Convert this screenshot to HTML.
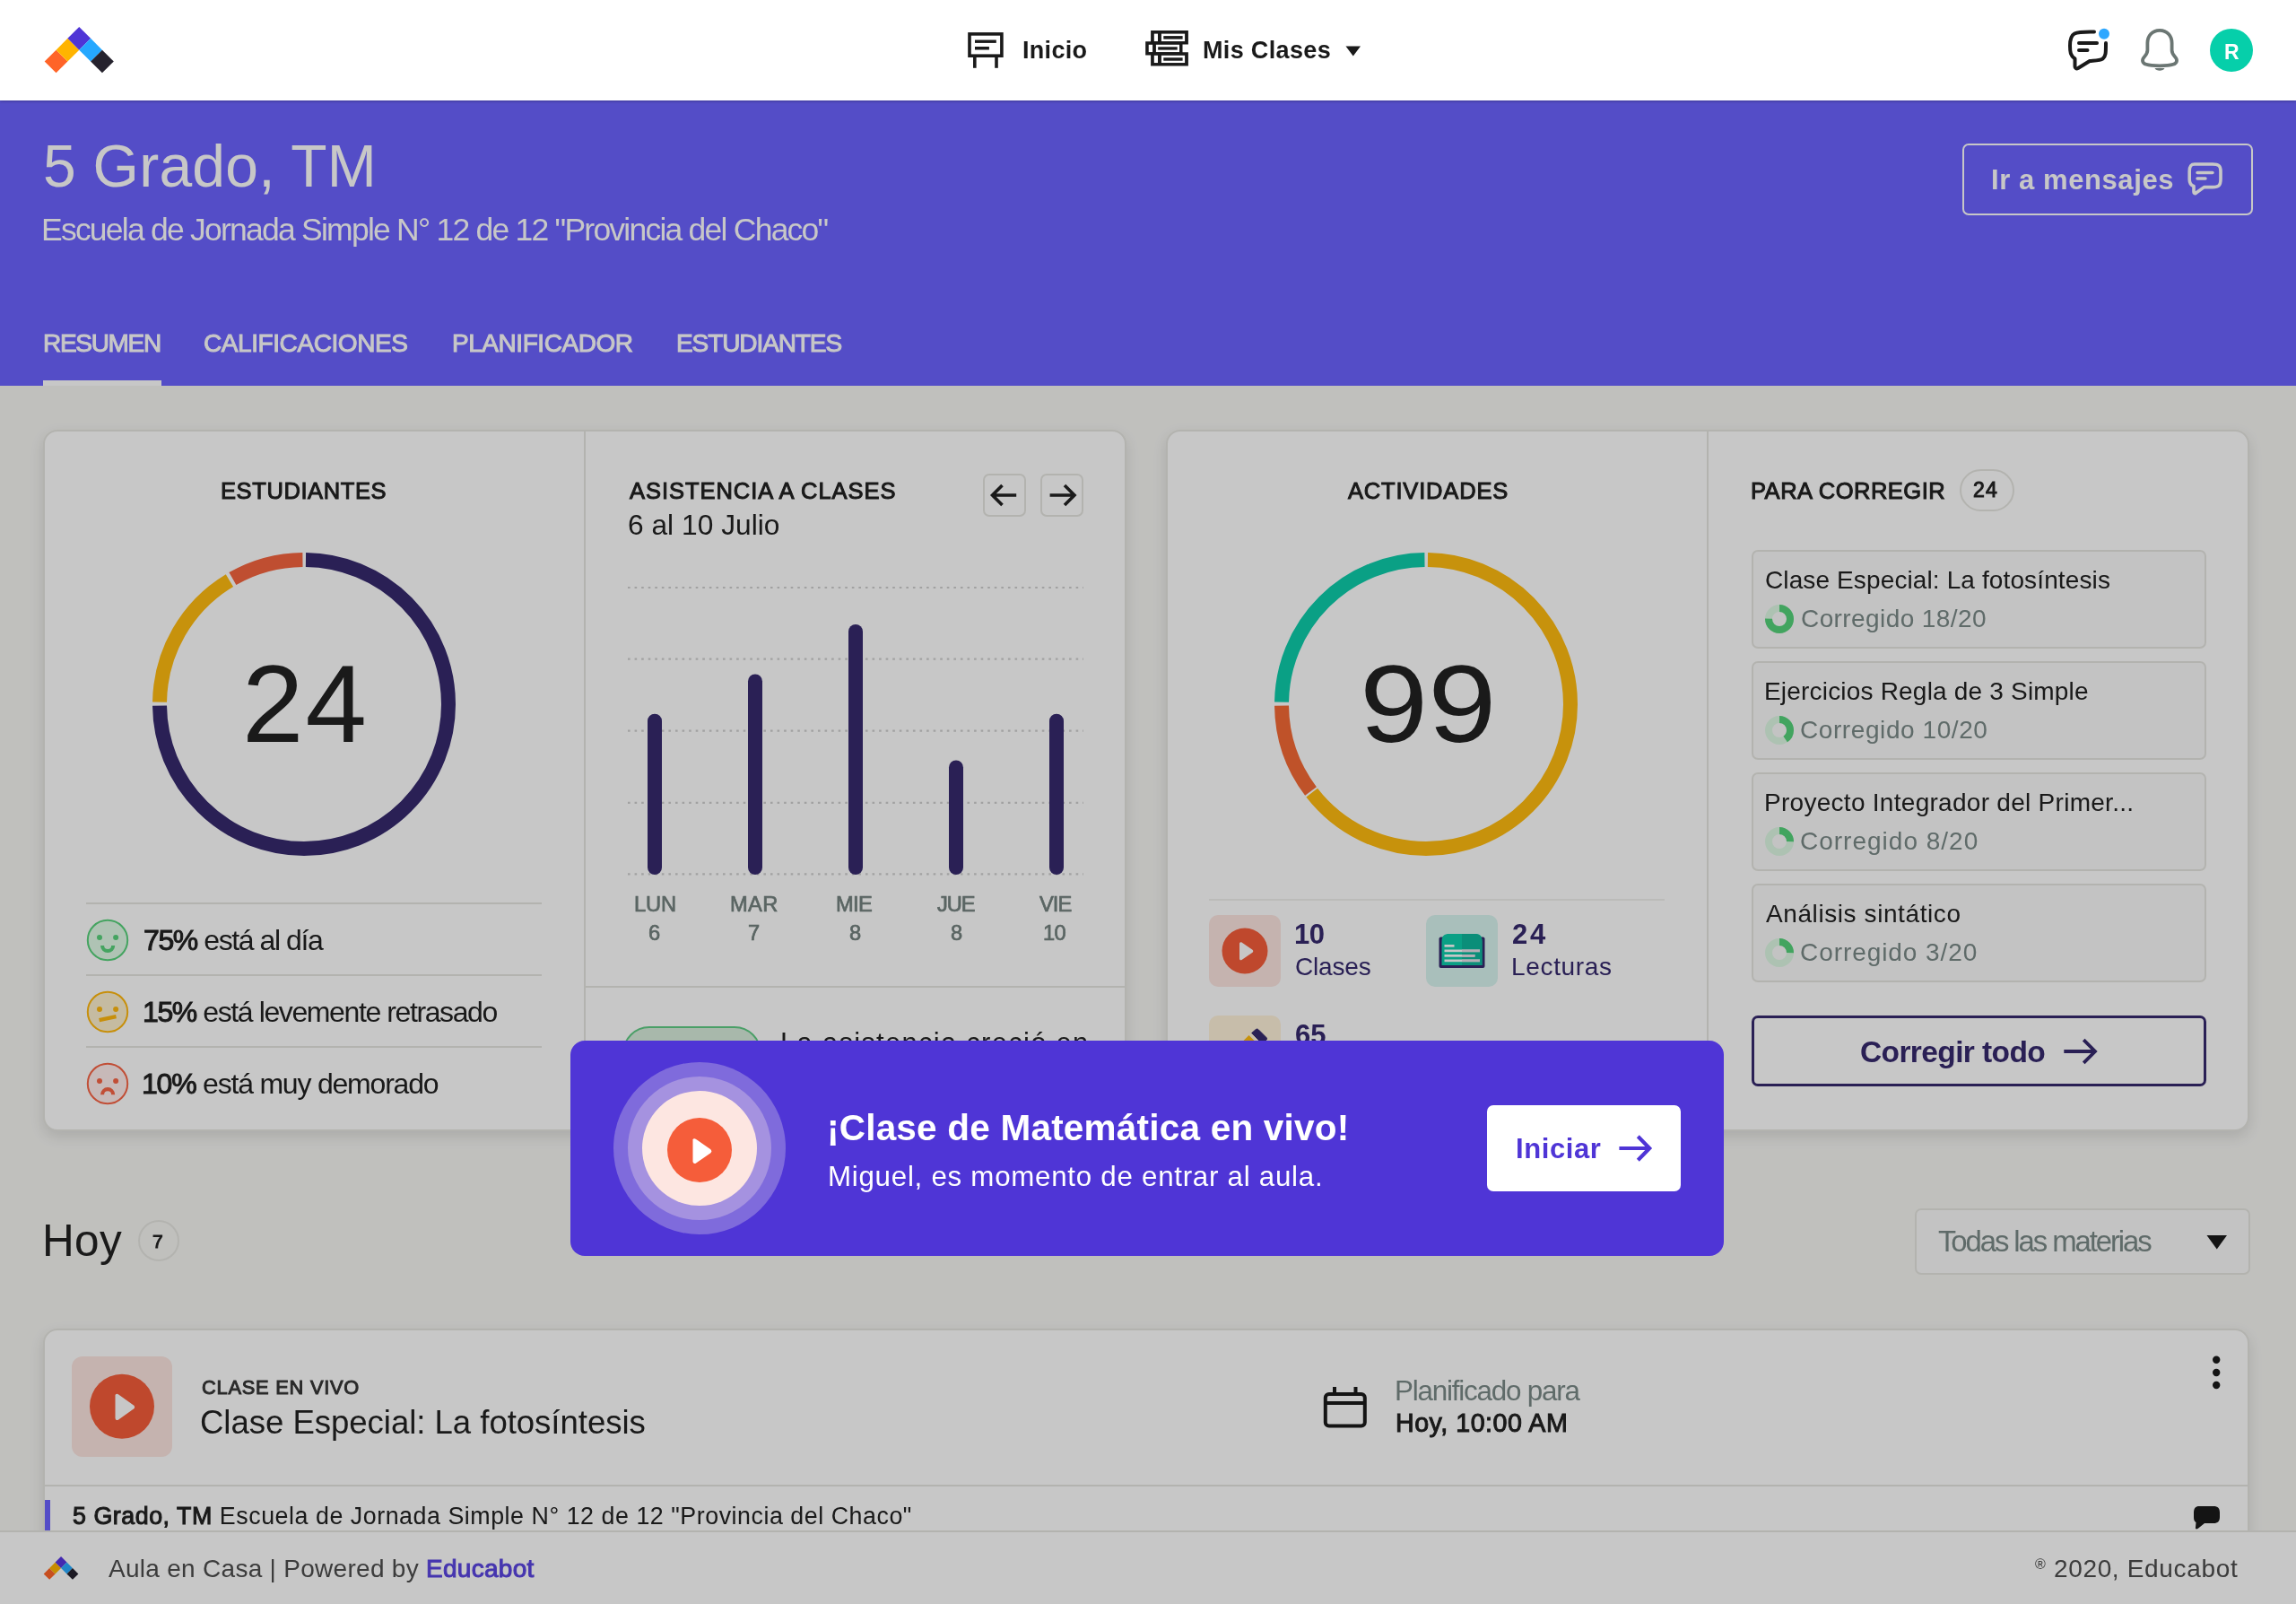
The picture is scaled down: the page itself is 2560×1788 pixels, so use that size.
<!DOCTYPE html>
<html><head><meta charset="utf-8">
<style>
*{box-sizing:border-box;margin:0;padding:0}
html,body{width:2560px;height:1788px;overflow:hidden}
body{position:relative;background:#f6f6f3;font-family:"Liberation Sans",sans-serif;color:#222}
.a{position:absolute}
.t{position:absolute;line-height:1;white-space:nowrap;will-change:transform}
.b{font-weight:normal;-webkit-text-stroke:1px currentColor}
b{font-weight:normal;-webkit-text-stroke:1px currentColor}
#header{position:absolute;left:0;top:0;width:2560px;height:112px;background:#fff;z-index:5;box-shadow:0 1px 3px rgba(0,0,0,0.25)}
#hero{position:absolute;left:0;top:112px;width:2560px;height:318px;background:#6c63ff;color:#fff}
.card{position:absolute;background:#fff;border:2px solid #e6e6e1;border-radius:16px;box-shadow:0 6px 16px rgba(0,0,0,0.11)}
#overlay{position:absolute;left:0;top:112px;width:2560px;height:1676px;background:rgba(0,0,0,0.22);z-index:4}
#banner{position:absolute;left:636px;top:1160px;width:1286px;height:240px;background:#4f35d6;border-radius:16px;z-index:10;color:#fff}
.it{border:2px solid #e6e6e1;border-radius:7px;background:#fafafa}
</style></head>
<body>
<div id="header">
<svg class="a" style="left:0;top:0" width="140" height="112" viewBox="0 0 140 112">
<polygon points="49.7,68.5 62.55,55.65 75.4,68.5 62.55,81.35" fill="#ff6428"/>
<polygon points="62.55,55.65 75.4,42.8 88.25,55.65 75.4,68.5" fill="#ffb400"/>
<polygon points="75.4,42.8 88.25,29.95 101.1,42.8 88.25,55.65" fill="#4f35d6"/>
<polygon points="88.25,55.65 101.1,42.8 113.95,55.65 101.1,68.5" fill="#25a8ff"/>
<polygon points="101.1,68.5 113.95,55.65 126.8,68.5 113.95,81.35" fill="#25222d"/>
</svg>
<!-- Inicio icon -->
<svg class="a" style="left:1075px;top:30px" width="50" height="50" viewBox="1075 30 50 50">
<rect x="1081" y="37.9" width="35.9" height="24.3" fill="none" stroke="#1a1a1a" stroke-width="3.6"/>
<rect x="1087" y="44.5" width="23.8" height="3.4" fill="#1a1a1a"/>
<rect x="1087" y="52" width="15.9" height="3.5" fill="#1a1a1a"/>
<rect x="1085" y="63" width="3.6" height="12.8" fill="#1a1a1a"/>
<rect x="1109.2" y="63" width="3.6" height="12.8" fill="#1a1a1a"/>
</svg>
<div class="t b" id="inicio" style="left:1139.50px;top:42.74px;font-size:27.00px;color:#1a1a1a;letter-spacing:0.300px;font-weight:bold;-webkit-text-stroke:0">Inicio</div>
<!-- Mis clases icon -->
<svg class="a" style="left:1270px;top:30px" width="60" height="50" viewBox="1270 30 60 50">
<polygon points="1283.1,34.05 1324.9,34.05 1324.9,49.5 1318.5,49.5 1318.5,58.2 1324.9,58.2 1324.9,73.6 1283.1,73.6 1283.1,61.5 1277.2,61.5 1277.2,46.2 1283.1,46.2" fill="#1a1a1a"/>
<g fill="#fff">
<rect x="1286.8" y="37.6" width="4.2" height="8.45"/><rect x="1294.9" y="37.6" width="26.2" height="8.45"/>
<rect x="1280.75" y="49.8" width="4.35" height="8.25"/><rect x="1288.9" y="49.8" width="26.1" height="8.25"/>
<rect x="1286.8" y="61.8" width="4.2" height="8.25"/><rect x="1294.9" y="61.8" width="26.2" height="8.25"/>
</g>
<g fill="#1a1a1a">
<rect x="1297.3" y="40.1" width="21.3" height="3.5"/>
<rect x="1291.2" y="52.3" width="21.5" height="3.3"/>
<rect x="1297.3" y="64.3" width="21.3" height="3.4"/>
</g>
</svg>
<div class="t b" id="misclases" style="left:1341.30px;top:42.74px;font-size:27.00px;color:#1a1a1a;letter-spacing:0.341px;font-weight:bold;-webkit-text-stroke:0">Mis Clases</div>
<svg class="a" style="left:1500px;top:51px" width="18" height="12" viewBox="0 0 18 12"><polygon points="0.5,0.5 17,0.5 8.75,11.5" fill="#1a1a1a"/></svg>
<!-- chat icon -->
<svg class="a" style="left:2300px;top:28px" width="56" height="56" viewBox="2300 28 56 56">
<path d="M2335,35.5 C2325,35.3 2317,35.5 2313,37.5 C2308.5,40 2308,45 2308,51 C2308,58 2308.5,62 2313.5,65.5 L2313.5,74 C2313.5,76 2315,77 2317,76 L2330,68 C2336,67.5 2342,67.5 2344.5,65.5 C2348,63 2348,59 2348,48" fill="none" stroke="#1a1a1a" stroke-width="4" stroke-linecap="round" stroke-linejoin="round"/>
<line x1="2318" y1="48" x2="2338" y2="48" stroke="#1a1a1a" stroke-width="4" stroke-linecap="round"/>
<line x1="2318" y1="56" x2="2327.5" y2="56" stroke="#1a1a1a" stroke-width="4" stroke-linecap="round"/>
<circle cx="2346" cy="37.8" r="6" fill="#2ea7ff"/>
</svg>
<!-- bell -->
<svg class="a" style="left:2380px;top:28px" width="56" height="56" viewBox="2380 28 56 56">
<path d="M2408,33.8 C2399.5,33.8 2394.4,40.5 2394.4,48 L2394.4,56 C2394.4,59 2393.5,60.5 2391,63.2 C2387.5,67 2388.8,70.5 2393,71.8 C2399,73.8 2417,73.8 2423,71.8 C2427.2,70.5 2428.5,67 2425,63.2 C2422.5,60.5 2421.6,59 2421.6,56 L2421.6,48 C2421.6,40.5 2416.5,33.8 2408,33.8 Z" fill="none" stroke="#6b7673" stroke-width="3.8" stroke-linejoin="round"/>
<path d="M2402.5,76 L2413.5,76 C2412,79.5 2404,79.5 2402.5,76 Z" fill="#6b7673"/>
</svg>
<div class="a" style="left:2464px;top:32px;width:48px;height:48px;border-radius:50%;background:#06cfaa"></div>
<div class="t b" id="avR" style="left:2480.00px;top:47.4px;font-size:23px;color:#fff;font-weight:bold;-webkit-text-stroke:0">R</div>
</div>
<div id="hero">
<div class="t" id="title" style="left:48.40px;top:40.1px;font-size:66px;letter-spacing:0.260px">5 Grado, TM</div>
<div class="t" id="subt" style="left:45.50px;top:127.25px;font-size:35.5px;letter-spacing:-1.768px">Escuela de Jornada Simple N° 12 de 12 "Provincia del Chaco"</div>
<div class="t b" id="tab1" style="left:47.50px;top:256.50px;font-size:28.00px;letter-spacing:-1.303px">RESUMEN</div>
<div class="t b" id="tab2" style="left:227.00px;top:256.50px;font-size:28.00px;letter-spacing:-0.424px">CALIFICACIONES</div>
<div class="t b" id="tab3" style="left:503.60px;top:256.50px;font-size:28.00px;letter-spacing:-0.444px">PLANIFICADOR</div>
<div class="t b" id="tab4" style="left:753.60px;top:256.50px;font-size:28.00px;letter-spacing:-1.090px">ESTUDIANTES</div>
<div class="a" style="left:48px;top:312px;width:132px;height:6px;background:#fff"></div>
<div class="a" style="left:2188px;top:48px;width:324px;height:80px;border:2px solid #fff;border-radius:7px"></div>
<div class="t b" id="irmsg" style="left:2219.70px;top:72.56px;font-size:31.00px;letter-spacing:0.582px;font-weight:bold;-webkit-text-stroke:0">Ir a mensajes</div>
<svg class="a" style="left:2436px;top:64px" width="48" height="60" viewBox="2436 64 48 60">
<path d="M2447,71 C2442.5,71 2441.2,73.5 2441.2,79 L2441.2,88 C2441.2,92 2442.5,94.5 2446,95.5 L2446,102 C2446,103.5 2447,104 2448.3,103.3 L2457.5,96.6 L2467,96.6 C2474,96.6 2476,94.6 2476,87.6 L2476,79 C2476,73 2474,71 2467,71 Z" fill="none" stroke="#fff" stroke-width="3.6" stroke-linejoin="round"/>
<line x1="2450" y1="80.5" x2="2467" y2="80.5" stroke="#fff" stroke-width="3.4" stroke-linecap="round"/>
<line x1="2450" y1="87" x2="2459" y2="87" stroke="#fff" stroke-width="3.4" stroke-linecap="round"/>
</svg>
</div>
<div class="card" id="c1" style="left:48px;top:479px;width:1208px;height:782px"></div>
<div class="a" style="left:651px;top:481px;width:2px;height:777px;background:#e6e6e1"></div>
<div class="a" style="left:653px;top:1099px;width:601px;height:2px;background:#e6e6e1"></div>
<div class="t b" id="h_est" style="left:246.20px;top:534.71px;font-size:25.50px;letter-spacing:0.600px">ESTUDIANTES</div>
<svg class="a" style="left:160px;top:606px" width="358" height="358" viewBox="0 0 358 358">
<g transform="rotate(-90 179 179)" fill="none" stroke-width="16">
<circle cx="179" cy="179" r="161" stroke="#362a6e" stroke-dasharray="754.7 1100" stroke-dashoffset="-2"/>
<circle cx="179" cy="179" r="161" stroke="#ffbb10" stroke-dasharray="163.2 1100" stroke-dashoffset="-760.7"/>
<circle cx="179" cy="179" r="161" stroke="#f5653f" stroke-dasharray="81.7 1100" stroke-dashoffset="-927.9"/>
</g>
</svg>
<div class="t" id="n24" style="left:269.90px;top:723px;font-size:123px;letter-spacing:2.100px">24</div>
<div class="a" style="left:96px;top:1005.5px;width:508px;height:2px;background:#e6e6e1"></div>
<div class="a" style="left:96px;top:1085.5px;width:508px;height:2px;background:#e6e6e1"></div>
<div class="a" style="left:96px;top:1165.5px;width:508px;height:2px;background:#e6e6e1"></div>
<svg class="a" style="left:96px;top:1024px" width="48" height="48" viewBox="0 0 48 48">
<circle cx="24" cy="24" r="22.2" fill="#e0fae7" stroke="#58d27c" stroke-width="2"/>
<circle cx="15" cy="21" r="3" fill="#58d27c"/><circle cx="33.1" cy="21" r="3" fill="#58d27c"/>
<path d="M16,30 A8.1,8.1 0 0 0 32.2,30 L28.1,30 A4,4 0 0 1 20.1,30 Z" fill="#58d27c"/>
</svg>
<svg class="a" style="left:96px;top:1104px" width="48" height="48" viewBox="0 0 48 48">
<circle cx="24" cy="24" r="22.2" fill="#fdf0cf" stroke="#ffb80f" stroke-width="2"/>
<circle cx="15" cy="21" r="3" fill="#ffb80f"/><circle cx="33.1" cy="21" r="3" fill="#ffb80f"/>
<line x1="14.6" y1="33.1" x2="33.5" y2="29.1" stroke="#ffb80f" stroke-width="4.4"/>
</svg>
<svg class="a" style="left:96px;top:1184px" width="48" height="48" viewBox="0 0 48 48">
<circle cx="24" cy="24" r="22.2" fill="#ffeeec" stroke="#f86546" stroke-width="2"/>
<circle cx="15" cy="21" r="3" fill="#f86546"/><circle cx="33.1" cy="21" r="3" fill="#f86546"/>
<path d="M16,36.2 A8.1,8.1 0 0 1 32.2,36.2 L28.1,36.2 A4,4 0 0 0 20.1,36.2 Z" fill="#f86546"/>
</svg>
<div class="t" id="st1" style="left:159.70px;top:1031.9px;font-size:32px;letter-spacing:-1.418px"><b>75%</b> está al día</div>
<div class="t" id="st2" style="left:158.70px;top:1111.9px;font-size:32px;letter-spacing:-1.399px"><b>15%</b> está levemente retrasado</div>
<div class="t" id="st3" style="left:158.20px;top:1191.9px;font-size:32px;letter-spacing:-1.210px"><b>10%</b> está muy demorado</div>
<div class="t b" id="h_asi" style="left:702.30px;top:534.81px;font-size:25.50px;letter-spacing:0.960px">ASISTENCIA A CLASES</div>
<div class="t" id="julio" style="left:700.00px;top:569.8px;font-size:31.7px;letter-spacing:0.025px">6 al 10 Julio</div>
<div class="a" style="left:1096px;top:528px;width:48px;height:47.5px;border:2px solid #e6e6e1;border-radius:7px"></div>
<div class="a" style="left:1160px;top:528px;width:48px;height:47.5px;border:2px solid #e6e6e1;border-radius:7px"></div>
<svg class="a" style="left:1096px;top:528px" width="112" height="48" viewBox="1096 528 112 48">
<g fill="none" stroke="#222" stroke-width="3.6" stroke-linecap="butt" stroke-linejoin="miter">
<path d="M1133.2,552 L1106.5,552 M1117.5,541 L1106.5,552 L1117.5,563"/>
<path d="M1170.6,552 L1198,552 M1187,541 L1198,552 L1187,563"/>
</g>
</svg>
<svg class="a" style="left:700px;top:650px" width="510" height="330" viewBox="700 650 510 330">
<g stroke="#cfcfcf" stroke-width="2.2" stroke-dasharray="2.6 4.97">
<line x1="700" y1="655" x2="1208" y2="655"/>
<line x1="700" y1="734.7" x2="1208" y2="734.7"/>
<line x1="700" y1="814.6" x2="1208" y2="814.6"/>
<line x1="700" y1="894.8" x2="1208" y2="894.8"/>
<line x1="700" y1="974.4" x2="1208" y2="974.4"/>
</g>
<g stroke="#362a6e" stroke-width="16" stroke-linecap="round">
<line x1="730" y1="803.7" x2="730" y2="967"/>
<line x1="842" y1="759.4" x2="842" y2="967"/>
<line x1="954" y1="704" x2="954" y2="967"/>
<line x1="1066" y1="855.5" x2="1066" y2="967"/>
<line x1="1178" y1="803.7" x2="1178" y2="967"/>
</g>
</svg>
<div class="t" id="d1" style="left:706.50px;top:997.00px;font-size:23.7px;color:#74827f;-webkit-text-stroke:0.7px #74827f;letter-spacing:-0.200px">LUN</div>
<div class="t" id="d2" style="left:814.00px;top:997.00px;font-size:23.7px;color:#74827f;-webkit-text-stroke:0.7px #74827f;letter-spacing:0.300px">MAR</div>
<div class="t" id="d3" style="left:932.00px;top:997.00px;font-size:23.7px;color:#74827f;-webkit-text-stroke:0.7px #74827f;letter-spacing:-0.650px">MIE</div>
<div class="t" id="d4" style="left:1045.00px;top:997.00px;font-size:23.7px;color:#74827f;-webkit-text-stroke:0.7px #74827f;letter-spacing:-1.150px">JUE</div>
<div class="t" id="d5" style="left:1159.00px;top:997.00px;font-size:23.7px;color:#74827f;-webkit-text-stroke:0.7px #74827f;letter-spacing:-1.000px">VIE</div>
<div class="t" id="n1" style="left:722.50px;top:1029.00px;font-size:23.7px;color:#74827f;-webkit-text-stroke:0.7px #74827f">6</div>
<div class="t" id="n2" style="left:834.00px;top:1029.00px;font-size:23.7px;color:#74827f;-webkit-text-stroke:0.7px #74827f">7</div>
<div class="t" id="n3" style="left:946.50px;top:1029.00px;font-size:23.7px;color:#74827f;-webkit-text-stroke:0.7px #74827f">8</div>
<div class="t" id="n4" style="left:1059.70px;top:1029.00px;font-size:23.7px;color:#74827f;-webkit-text-stroke:0.7px #74827f">8</div>
<div class="t" id="n5" style="left:1163.40px;top:1029.00px;font-size:23.7px;color:#74827f;-webkit-text-stroke:0.7px #74827f;letter-spacing:-0.700px">10</div>
<div class="a" style="left:694px;top:1144px;width:155px;height:60px;border:2px solid #5fcc85;background:#d8ecdc;border-radius:30px"></div>
<div class="t" id="crecio" style="left:870px;top:1147px;font-size:31px;letter-spacing:1.27px">La asistencia creció en</div>
<div class="card" id="c2" style="left:1300px;top:479px;width:1208px;height:782px"></div>
<div class="a" style="left:1903px;top:481px;width:2px;height:777px;background:#e6e6e1"></div>
<div class="t b" id="h_act" style="left:1502.50px;top:535.01px;font-size:25.50px;letter-spacing:0.820px">ACTIVIDADES</div>
<svg class="a" style="left:1411px;top:606px" width="358" height="358" viewBox="0 0 358 358">
<g transform="rotate(-90 179 179)" fill="none" stroke-width="16">
<circle cx="179" cy="179" r="161" stroke="#ffbb10" stroke-dasharray="650.3 1100" stroke-dashoffset="-2"/>
<circle cx="179" cy="179" r="161" stroke="#f56a35" stroke-dasharray="102.4 1100" stroke-dashoffset="-654.3"/>
<circle cx="179" cy="179" r="161" stroke="#0dcdab" stroke-dasharray="248.9 1100" stroke-dashoffset="-760.7"/>
</g>
</svg>
<div class="t" id="n99" style="left:1516.1px;top:723px;font-size:123px;transform:scaleX(1.113);transform-origin:0 0">99</div>
<div class="a" style="left:1348px;top:1002px;width:508px;height:2px;background:#f0f0ee"></div>
<div class="a" style="left:1348px;top:1020px;width:80px;height:80px;border-radius:10px;background:#fde6e1"></div>
<svg class="a" style="left:1348px;top:1020px" width="80" height="80" viewBox="0 0 80 80">
<circle cx="40" cy="40" r="25.5" fill="#f55d3a"/>
<path d="M34,32 L34,48.5 C34,50 35.2,50.8 36.5,50 L48.5,41.8 C49.5,41 49.5,39.5 48.5,38.8 L36.5,30.5 C35.2,29.7 34,30.5 34,32 Z" fill="#fff"/>
</svg>
<div class="t b" id="a10" style="left:1442.50px;top:1026.16px;font-size:31px;color:#362a6e;font-weight:bold;-webkit-text-stroke:0;letter-spacing:-0.500px">10</div>
<div class="t" id="aclases" style="left:1443.50px;top:1064px;font-size:28px;color:#362a6e;letter-spacing:-0.180px">Clases</div>
<div class="a" style="left:1590px;top:1020px;width:80px;height:80px;border-radius:10px;background:#d9f5f0"></div>
<svg class="a" style="left:1590px;top:1020px" width="80" height="80" viewBox="0 0 80 80">
<rect x="14.5" y="24.5" width="51" height="34.5" rx="2" fill="#362a6e"/>
<path d="M17.5,30 C17.5,23 20,21 26,21 L54,21 C60,21 62.5,23 62.5,30 L62.5,56 L17.5,56 Z" fill="#0dcdab"/>
<path d="M40,21 L54,21 C60,21 62.5,23 62.5,30 L62.5,56 L40,56 Z" fill="#0fb69c"/>
<g fill="#fff">
<rect x="20.5" y="33" width="11" height="2.7"/>
<rect x="20.5" y="38.5" width="39.5" height="2.7"/>
<rect x="20.5" y="44" width="34" height="2.7"/>
<rect x="20.5" y="49.5" width="39.5" height="2.7"/>
</g>
<g fill="#e8dce8" opacity="0.9">
<rect x="40" y="38.5" width="20" height="2.7"/>
<rect x="40" y="44" width="14.5" height="2.7"/>
<rect x="40" y="49.5" width="20" height="2.7"/>
</g>
</svg>
<div class="t b" id="a24" style="left:1685.70px;top:1026.16px;font-size:31px;color:#362a6e;font-weight:bold;-webkit-text-stroke:0;letter-spacing:2.700px">24</div>
<div class="t" id="alect" style="left:1684.70px;top:1064px;font-size:28px;color:#362a6e;letter-spacing:0.667px">Lecturas</div>
<div class="a" style="left:1348px;top:1132px;width:80px;height:80px;border-radius:10px;background:#fff3da"></div>
<svg class="a" style="left:1348px;top:1132px" width="80" height="80" viewBox="0 0 80 80">
<polygon points="44.5,22.1 52,29.6 44.5,37 37,29.6" fill="#ffbb10"/>
<path d="M47.7,19.5 L52.2,15.6 C53,14.9 54.3,14.9 55.1,15.7 L64,24.6 C64.8,25.4 64.8,26.6 64,27.3 L58.5,30.7 Z" fill="#362a6e" stroke="#362a6e" stroke-width="1" stroke-linejoin="round"/>
</svg>
<div class="t b" id="a65" style="left:1444px;top:1138.16px;font-size:31px;color:#362a6e;font-weight:bold;-webkit-text-stroke:0">65</div>
<div class="t b" id="h_par" style="left:1952.20px;top:534.71px;font-size:25.50px;letter-spacing:0.502px">PARA CORREGIR</div>
<div class="a" style="left:2184.5px;top:522.5px;width:61px;height:47px;border:2px solid #e6e6e1;border-radius:24px"></div>
<div class="t b" id="badge24" style="left:2200.40px;top:535.43px;font-size:23.00px;letter-spacing:1.300px">24</div>
<div class="a it" style="left:1952.5px;top:613px;width:507px;height:110px"></div>
<div class="a it" style="left:1952.5px;top:737px;width:507px;height:110px"></div>
<div class="a it" style="left:1952.5px;top:861px;width:507px;height:110px"></div>
<div class="a it" style="left:1952.5px;top:985px;width:507px;height:110px"></div>
<div class="t" id="it1" style="left:1968.00px;top:633.3px;font-size:28px;letter-spacing:0.119px">Clase Especial: La fotosíntesis</div>
<div class="t" id="it2" style="left:1966.60px;top:757.3px;font-size:28px;letter-spacing:0.192px">Ejercicios Regla de 3 Simple</div>
<div class="t" id="it3" style="left:1966.60px;top:881.3px;font-size:28px;letter-spacing:0.281px">Proyecto Integrador del Primer...</div>
<div class="t" id="it4" style="left:1968.60px;top:1005.3px;font-size:28px;letter-spacing:0.588px">Análisis sintático</div>
<svg class="a" style="left:1968px;top:674px" width="32" height="32" viewBox="0 0 32 32"><circle cx="16" cy="16" r="12" fill="none" stroke="#def9e5" stroke-width="8"/><circle cx="16" cy="16" r="12" fill="none" stroke="#55d27a" stroke-width="8" stroke-dasharray="56.55 100" transform="rotate(-90 16 16)"/></svg>
<svg class="a" style="left:1968px;top:798px" width="32" height="32" viewBox="0 0 32 32"><circle cx="16" cy="16" r="12" fill="none" stroke="#def9e5" stroke-width="8"/><circle cx="16" cy="16" r="12" fill="none" stroke="#55d27a" stroke-width="8" stroke-dasharray="30.4 100" transform="rotate(-90 16 16)"/></svg>
<svg class="a" style="left:1968px;top:922px" width="32" height="32" viewBox="0 0 32 32"><circle cx="16" cy="16" r="12" fill="none" stroke="#def9e5" stroke-width="8"/><circle cx="16" cy="16" r="12" fill="none" stroke="#55d27a" stroke-width="8" stroke-dasharray="18.85 100" transform="rotate(-90 16 16)"/></svg>
<svg class="a" style="left:1968px;top:1046px" width="32" height="32" viewBox="0 0 32 32"><circle cx="16" cy="16" r="12" fill="none" stroke="#def9e5" stroke-width="8"/><circle cx="16" cy="16" r="12" fill="none" stroke="#55d27a" stroke-width="8" stroke-dasharray="18.85 100" transform="rotate(-90 16 16)"/></svg>
<div class="t" id="co1" style="left:2007.60px;top:676.3px;font-size:28px;color:#7a8987;letter-spacing:0.414px">Corregido 18/20</div>
<div class="t" id="co2" style="left:2007.30px;top:800.3px;font-size:28px;color:#7a8987;letter-spacing:0.582px">Corregido 10/20</div>
<div class="t" id="co3" style="left:2007.30px;top:924.3px;font-size:28px;color:#7a8987;letter-spacing:1.001px">Corregido 8/20</div>
<div class="t" id="co4" style="left:2007.30px;top:1048.3px;font-size:28px;color:#7a8987;letter-spacing:0.924px">Corregido 3/20</div>
<div class="a" style="left:1952.5px;top:1132px;width:507px;height:79px;border:3px solid #362a6e;border-radius:7px"></div>
<div class="t b" id="corr" style="left:2073.90px;top:1156px;font-size:33.5px;color:#362a6e;letter-spacing:-0.610px;font-weight:bold;-webkit-text-stroke:0">Corregir todo</div>
<svg class="a" style="left:2296px;top:1148px" width="48" height="48" viewBox="2296 1148 48 48">
<path d="M2301.3,1172 L2335,1172 M2323.2,1159.2 L2336,1172 L2323.2,1184.8" fill="none" stroke="#362a6e" stroke-width="3.8" stroke-linecap="butt" stroke-linejoin="miter"/>
</svg>
<div class="t" id="hoy" style="left:47.20px;top:1358.2px;font-size:49.5px;letter-spacing:0.300px">Hoy</div>
<div class="a" style="left:154px;top:1359.5px;width:46px;height:46px;border:2px solid #e6e6e1;border-radius:50%"></div>
<div class="t b" id="badge7" style="left:169.70px;top:1372.72px;font-size:21.00px">7</div>
<div class="a" style="left:2135px;top:1347px;width:374px;height:74px;border:2px solid #e6e6e1;border-radius:7px;background:#fafafa"></div>
<div class="t" id="todas" style="left:2160.50px;top:1368.15px;font-size:32.9px;color:#7a8987;letter-spacing:-2.089px">Todas las materias</div>
<svg class="a" style="left:2460px;top:1376px" width="24" height="18" viewBox="0 0 24 18"><polygon points="0.5,1 23,1 11.75,16.5" fill="#1a1a1a"/></svg>
<div class="card" id="c3" style="left:48px;top:1481px;width:2460px;height:400px"></div>
<div class="a" style="left:80px;top:1512px;width:112px;height:112px;border-radius:12px;background:#fde6e1"></div>
<svg class="a" style="left:80px;top:1512px" width="112" height="111" viewBox="0 0 112 111">
<circle cx="56" cy="55.8" r="36" fill="#f55d3a"/>
<path d="M48.5,43.5 L48.5,68.5 C48.5,70.8 50.3,71.8 52.2,70.6 L69,58.6 C70.5,57.5 70.5,55.5 69,54.4 L52.2,42.4 C50.3,41.2 48.5,42.2 48.5,43.5 Z" fill="#fff"/>
</svg>
<div class="t b" id="cenvivo" style="left:224.70px;top:1535.75px;font-size:21.80px;color:#363636;letter-spacing:0.779px">CLASE EN VIVO</div>
<div class="t" id="cespecial" style="left:222.70px;top:1567.60px;font-size:36.6px;letter-spacing:-0.044px">Clase Especial: La fotosíntesis</div>
<svg class="a" style="left:1470px;top:1540px" width="60" height="56" viewBox="1470 1540 60 56">
<rect x="1477.8" y="1554" width="44" height="35.5" rx="4" fill="none" stroke="#1a1a1a" stroke-width="4"/>
<line x1="1477.8" y1="1564" x2="1521.8" y2="1564" stroke="#1a1a1a" stroke-width="3.8"/>
<line x1="1488" y1="1546" x2="1488" y2="1555" stroke="#1a1a1a" stroke-width="4"/>
<line x1="1511.5" y1="1546" x2="1511.5" y2="1555" stroke="#1a1a1a" stroke-width="4"/>
</svg>
<div class="t" id="planif" style="left:1554.60px;top:1534.6px;font-size:31.4px;color:#7a8987;letter-spacing:-1.216px">Planificado para</div>
<div class="t b" id="hoy10" style="left:1555.60px;top:1572.39px;font-size:28.60px;letter-spacing:0.526px">Hoy, 10:00 AM</div>
<svg class="a" style="left:2460px;top:1506px" width="24" height="48" viewBox="0 0 24 48"><circle cx="11.2" cy="9.8" r="4.2" fill="#1a1a1a"/><circle cx="11.2" cy="24" r="4.2" fill="#1a1a1a"/><circle cx="11.2" cy="38" r="4.2" fill="#1a1a1a"/></svg>
<div class="a" style="left:50px;top:1654.5px;width:2456px;height:2px;background:#e6e6e1"></div>
<div class="a" style="left:50px;top:1672px;width:6px;height:40px;background:#6c63ff"></div>
<div class="t" id="grado2" style="left:80.80px;top:1677.2px;font-size:26.8px;letter-spacing:0.539px"><b>5 Grado, TM</b> Escuela de Jornada Simple N° 12 de 12 "Provincia del Chaco"</div>
<svg class="a" style="left:2440px;top:1674px" width="40" height="34" viewBox="2440 1674 40 34"><path d="M2452,1679 L2468,1679 C2473,1679 2475,1681.5 2475,1686 L2475,1691 C2475,1695.5 2473,1698 2468,1698 L2458,1698 L2450.5,1704 C2449,1705 2447.5,1704.5 2448,1702.5 L2448.5,1697 C2446.5,1696 2446,1694 2446,1691 L2446,1686 C2446,1681.5 2448,1679 2452,1679 Z" fill="#1a1a1a"/></svg>
<div id="footer" class="a" style="left:0;top:1706px;width:2560px;height:82px;background:#fff;border-top:2px solid #e6e6e1"></div>
<svg class="a" style="left:40px;top:1725px" width="56" height="44" viewBox="40 1725 56 44"><polygon points="48.70,1754.40 55.15,1747.95 61.60,1754.40 55.15,1760.85" fill="#ff6428"/><polygon points="55.15,1747.95 61.60,1741.50 68.05,1747.95 61.60,1754.40" fill="#ffb400"/><polygon points="61.60,1741.50 68.05,1735.05 74.50,1741.50 68.05,1747.95" fill="#5735e2"/><polygon points="68.05,1747.95 74.50,1741.50 80.95,1747.95 74.50,1754.40" fill="#2aabff"/><polygon points="74.50,1754.40 80.95,1747.95 87.40,1754.40 80.95,1760.85" fill="#25222d"/></svg>
<div class="t" id="aula" style="left:121.30px;top:1735.30px;font-size:28px;color:#4d4d4d;letter-spacing:0.287px">Aula en Casa | Powered by <b style="color:#5a45e0">Educabot</b></div>
<div class="t" id="copy" style="left:2269.00px;top:1735.30px;font-size:28px;color:#4d4d4d;letter-spacing:0.667px"><span style="font-size:16px;vertical-align:9px">®</span> 2020, Educabot</div>
<div id="overlay"></div>
<div id="banner">
<svg class="a" style="left:47.8px;top:24px" width="192" height="192" viewBox="0 0 192 192">
<circle cx="96" cy="96" r="96" fill="#7f6bdc"/>
<circle cx="96" cy="96" r="80" fill="#a592e0"/>
<circle cx="96" cy="96" r="64" fill="#fde6e1"/>
<circle cx="96" cy="98" r="36" fill="#f55d3a"/>
<path d="M88.5,86.5 L88.5,110.5 C88.5,112.7 90.3,113.7 92.1,112.5 L108,101.5 C109.7,100.3 109.7,98.1 108,96.9 L92.1,85.9 C90.3,84.7 88.5,85.7 88.5,86.5 Z" fill="#fff"/>
</svg>
<div class="t b" id="bt1" style="left:286.20px;top:76.7px;font-size:40.5px;letter-spacing:0.213px;font-weight:bold;-webkit-text-stroke:0">¡Clase de Matemática en vivo!</div>
<div class="t" id="bt2" style="left:287.00px;top:135.8px;font-size:31.3px;letter-spacing:0.728px">Miguel, es momento de entrar al aula.</div>
<div class="a" style="left:1022px;top:72px;width:216px;height:96px;background:#fff;border-radius:7px"></div>
<div class="t b" id="iniciar" style="left:1053.50px;top:104.56px;font-size:31px;color:#4f35d6;letter-spacing:0.583px;font-weight:bold;-webkit-text-stroke:0">Iniciar</div>
<svg class="a" style="left:1164px;top:96px" width="48" height="48" viewBox="0 0 48 48">
<path d="M5.4,24 L39,24 M26.3,10.8 L39.2,24 L26.3,37.2" fill="none" stroke="#4f35d6" stroke-width="4.2" stroke-linecap="butt" stroke-linejoin="miter"/>
</svg>
</div>
</body></html>
